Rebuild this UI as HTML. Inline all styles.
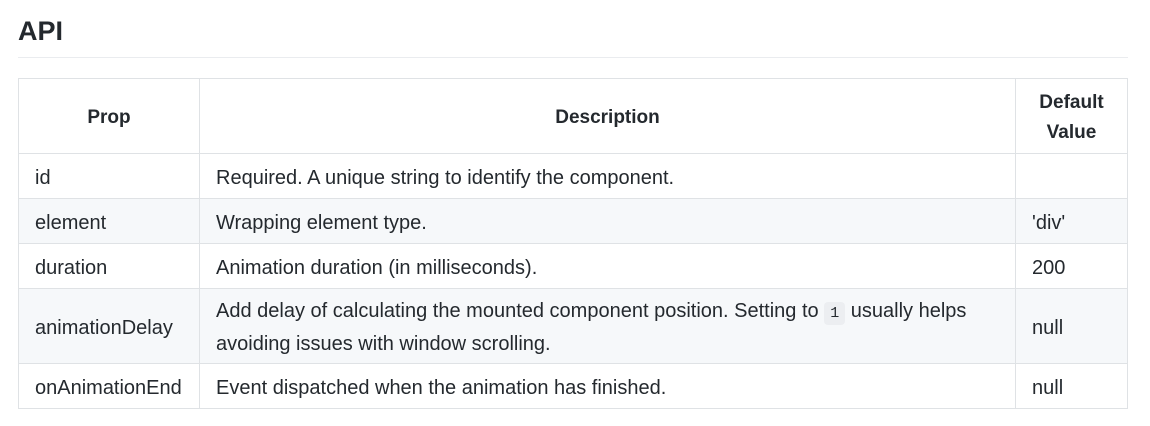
<!DOCTYPE html>
<html><head><style>
body{margin:0;background:#fff;font-family:"Liberation Sans",sans-serif;color:#24292e;}
h2{position:absolute;left:18px;top:13px;margin:0;font-size:27px;font-weight:bold;line-height:36px;}
.hr{position:absolute;left:18px;top:57px;width:1110px;height:1px;background:#eaecef;}
table{position:absolute;left:18px;top:78px;border-collapse:collapse;font-size:20px;table-layout:fixed;width:1109px;}
td,th{border:1px solid #dfe2e5;padding:3px 16px 0;line-height:30px;vertical-align:middle;}
th{font-weight:bold;text-align:center;font-size:19px;}
tr:nth-child(odd) td{background:#f6f8fa;}
code{font-family:"Liberation Mono",monospace;font-size:15px;background:#eceef1;border-radius:4px;padding:3px 6px;}
</style></head><body>
<h2>API</h2><div class="hr"></div>
<table>
<colgroup><col style="width:181px"><col style="width:816px"><col style="width:112px"></colgroup>
<tr style="height:75px"><th>Prop</th><th>Description</th><th>Default Value</th></tr>
<tr style="height:45px"><td>id</td><td>Required. A unique string to identify the component.</td><td></td></tr>
<tr style="height:45px"><td>element</td><td>Wrapping element type.</td><td>'div'</td></tr>
<tr style="height:45px"><td>duration</td><td>Animation duration (in milliseconds).</td><td>200</td></tr>
<tr style="height:75px"><td>animationDelay</td><td>Add delay of calculating the mounted component position. Setting to <code>1</code> usually helps<br>avoiding issues with window scrolling.</td><td>null</td></tr>
<tr style="height:45px"><td>onAnimationEnd</td><td>Event dispatched when the animation has finished.</td><td>null</td></tr>
</table>
</body></html>
